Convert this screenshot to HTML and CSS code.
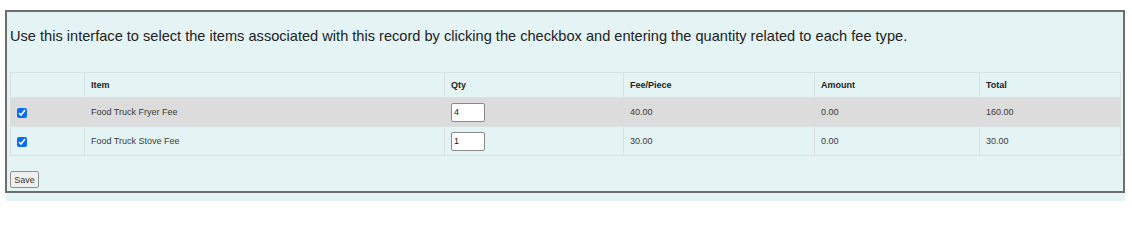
FILE: index.html
```html
<!DOCTYPE html>
<html>
<head>
<meta charset="utf-8">
<link rel="stylesheet" href="styles.css">
</head>
<body>
<div class="page">
  <div class="panel">
    <p class="intro">Use this interface to select the items associated with this record by clicking the checkbox and entering the quantity related to each fee type.</p>
    <table class="fees">
      <colgroup>
        <col style="width:74px">
        <col style="width:360px">
        <col style="width:179px">
        <col style="width:191px">
        <col style="width:165px">
        <col style="width:141px">
      </colgroup>
      <thead>
        <tr>
          <th></th>
          <th>Item</th>
          <th>Qty</th>
          <th>Fee/Piece</th>
          <th>Amount</th>
          <th>Total</th>
        </tr>
      </thead>
      <tbody>
        <tr class="alt">
          <td><input type="checkbox" class="chk" checked></td>
          <td>Food Truck Fryer Fee</td>
          <td><input type="text" class="qty" value="4"></td>
          <td>40.00</td>
          <td>0.00</td>
          <td>160.00</td>
        </tr>
        <tr>
          <td><input type="checkbox" class="chk" checked></td>
          <td>Food Truck Stove Fee</td>
          <td><input type="text" class="qty" value="1"></td>
          <td>30.00</td>
          <td>0.00</td>
          <td>30.00</td>
        </tr>
      </tbody>
    </table>
    <button class="save" type="button">Save</button>
  </div>
  <div class="strip"></div>
</div>
</body>
</html>
```

FILE: styles.css
```css
html, body {
  margin: 0;
  padding: 0;
  background: #ffffff;
}

.page {
  padding: 10px 8px 0 5px;
  font-family: "Liberation Sans", Arial, sans-serif;
}

.panel {
  width: 1120px;
  box-sizing: border-box;
  height: 183px;
  border: 2px solid #6e6e6e;
  background: #e4f4f4;
  padding: 0 3px 0 3px;
}

.intro {
  margin: 16px 0 0 0;
  font-size: 14.6px;
  line-height: 16px;
  color: #222222;
}

.fees {
  margin-top: 28px;
  width: 1110px;
  border-collapse: collapse;
  table-layout: fixed;
  border: 1px solid #d9e2e2;
  font-size: 9px;
  color: #3a3a3a;
}

.fees th,
.fees td {
  border: 1px solid #d9e2e2;
  padding: 0 6px;
  text-align: left;
  vertical-align: middle;
}

.fees th {
  height: 24px;
  font-weight: bold;
  color: #222222;
}

.fees td {
  height: 28px;
}

.fees tr.alt td {
  background: #dcdcdc;
  border-left-color: #dcdcdc;
  border-right-color: #dcdcdc;
}

.chk {
  width: 10px;
  height: 10px;
  margin: 3px 0 0 0;
  accent-color: #0a6cf5;
}

.qty {
  width: 34px;
  height: 19px;
  box-sizing: border-box;
  margin: 0;
  padding: 0 2px;
  border: 1px solid #8a8a8a;
  border-radius: 2px;
  background: #ffffff;
  font-family: "Liberation Sans", Arial, sans-serif;
  font-size: 9px;
  color: #222222;
}

.save {
  margin-top: 15px;
  width: 29px;
  height: 17px;
  padding: 0;
  font-family: "Liberation Sans", Arial, sans-serif;
  font-size: 9px;
  color: #333333;
  background: #f0f0f0;
  border: 1px solid #8f8f8f;
  border-radius: 2px;
}

.strip {
  margin-left: 1px;
  width: 1119px;
  height: 8px;
  background: #e4f4f4;
}
```
